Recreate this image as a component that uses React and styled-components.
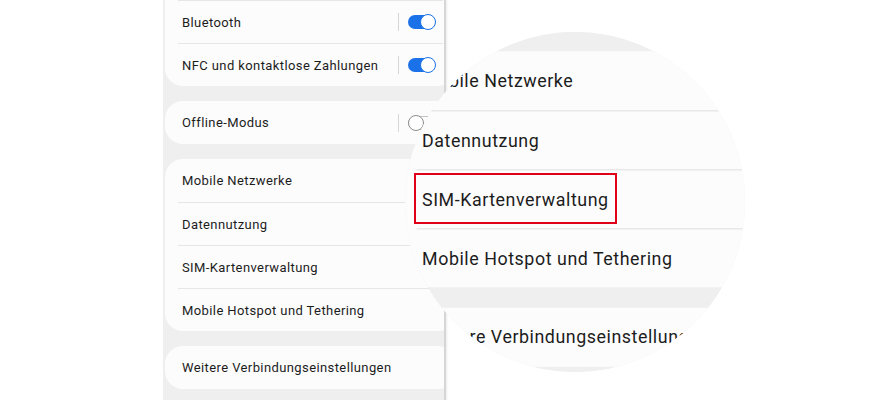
import React from 'react';
import styled, { createGlobalStyle, css } from 'styled-components';

const GlobalStyle = createGlobalStyle`
  html, body {
    margin: 0;
    padding: 0;
    background: #ffffff;
  }
  body {
    font-family: Roboto, "Noto Sans", "Liberation Sans", sans-serif;
  }
`;

const ZOOM = 1.372;

const Page = styled.div`
  position: relative;
  width: 879px;
  height: 400px;
  overflow: hidden;
  background: #ffffff;
  display: flex;
  padding-left: 163px;
  box-sizing: border-box;
`;

const Screen = styled.div`
  width: 283px;
  height: 400px;
  flex-shrink: 0;
  box-sizing: border-box;
  background: #efefef;
  border-right: 2px solid #d6d6d6;
  box-shadow: 1px 0 2px rgba(0, 0, 0, 0.08);
  overflow: hidden;
  padding: ${(p) => p.$offset || 0}px 0 0 2px;
  display: flex;
  flex-direction: column;
  gap: 15px;
`;

const Card = styled.section`
  width: 291px;
  flex-shrink: 0;
  background: #fcfcfc;
  border-radius: ${(p) => (p.$cut ? '0 0 18px 18px' : '18px')};
  padding: 0 13px;
  box-sizing: border-box;
`;

const Row = styled.div`
  height: 43px;
  box-sizing: border-box;
  display: flex;
  align-items: center;
  padding: 0 8px 0 4px;
  font-size: 13px;
  letter-spacing: 0.4px;
  color: #1c1c1c;
  white-space: nowrap;

  & + & {
    border-top: 1px solid #e6e6e6;
  }

  ${(p) =>
    p.$cut &&
    css`
      &:first-child {
        border-top: 1px solid #e6e6e6;
      }
    `}
`;

const Label = styled.span`
  flex: 1;
`;

const SwitchGroup = styled.div`
  display: flex;
  align-items: center;
  gap: 9px;
`;

const Separator = styled.span`
  width: 1px;
  height: 18px;
  background: #d6d6d6;
`;

const Track = styled.span`
  width: 27px;
  height: 14px;
  box-sizing: border-box;
  border-radius: 8px;
  display: flex;
  align-items: center;
  justify-content: ${(p) => (p.$on ? 'flex-end' : 'flex-start')};
  background: ${(p) => (p.$on ? '#1b72e8' : 'transparent')};
  border: ${(p) => (p.$on ? 'none' : '1px solid #c4c4c4')};
`;

const Knob = styled.span`
  width: 16px;
  height: 16px;
  box-sizing: border-box;
  border-radius: 50%;
  background: #ffffff;
  border: 1.5px solid ${(p) => (p.$on ? '#1b72e8' : '#8d8d8d')};
  margin: ${(p) => (p.$on ? '0 -1px 0 0' : '0 0 0 -1px')};
  flex-shrink: 0;
`;

const Lens = styled.div`
  position: absolute;
  left: 405px;
  top: 32px;
  width: 340px;
  height: 340px;
  border-radius: 50%;
  overflow: hidden;
  background: #f1f1f1;
`;

const Magnified = styled.div`
  position: absolute;
  left: -9.1px;
  top: -199.3px;
  transform-origin: 0 0;
  transform: scale(${ZOOM});
`;

const Highlight = styled.div`
  position: absolute;
  left: 9px;
  top: 141px;
  width: 203px;
  height: 51px;
  box-sizing: border-box;
  border: 2px solid #e1001a;
`;

function Switch({ on }) {
  return (
    <SwitchGroup>
      <Separator />
      <Track $on={on}>
        <Knob $on={on} />
      </Track>
    </SwitchGroup>
  );
}

const groups = [
  {
    cut: true,
    rows: [
      { label: 'Bluetooth', toggle: true },
      { label: 'NFC und kontaktlose Zahlungen', toggle: true },
    ],
  },
  { rows: [{ label: 'Offline-Modus', toggle: false }] },
  {
    rows: [
      { label: 'Mobile Netzwerke' },
      { label: 'Datennutzung' },
      { label: 'SIM-Kartenverwaltung' },
      { label: 'Mobile Hotspot und Tethering' },
    ],
  },
  { rows: [{ label: 'Weitere Verbindungseinstellungen' }] },
];

// the lens only shows the lower groups, so the magnified copy starts there
function SettingsScreen({ from = 0, offset = 0 }) {
  return (
    <Screen $offset={offset}>
      {groups.slice(from).map((group, i) => (
        <Card key={i} $cut={group.cut}>
          {group.rows.map((row) => (
            <Row key={row.label} $cut={group.cut}>
              <Label>{row.label}</Label>
              {row.toggle !== undefined && <Switch on={row.toggle} />}
            </Row>
          ))}
        </Card>
      ))}
    </Screen>
  );
}

export default function App() {
  return (
    <>
      <GlobalStyle />
      <Page>
        <SettingsScreen />
        <Lens>
          <Magnified>
            <SettingsScreen from={2} offset={159} />
          </Magnified>
          <Highlight />
        </Lens>
      </Page>
    </>
  );
}
